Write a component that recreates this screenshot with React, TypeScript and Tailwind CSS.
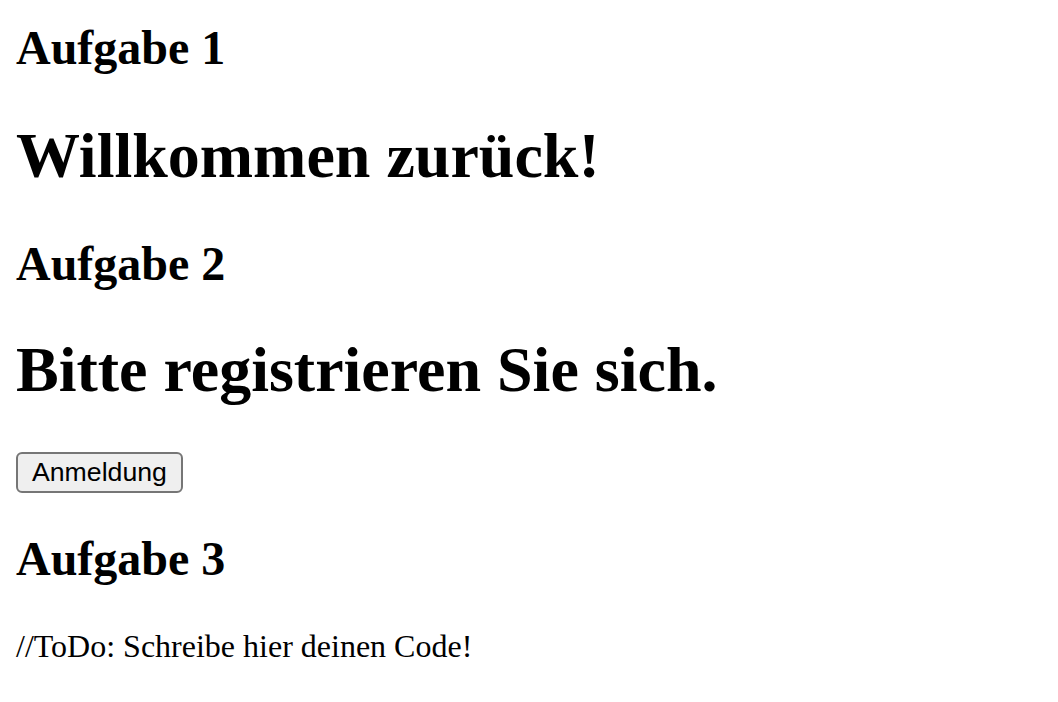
export default function App() {
  return (
    <div className="min-h-screen bg-white px-4 pt-5 text-black [font-family:'Liberation_Serif','Times_New_Roman',serif]">
      <h2 className="text-[48px] leading-[55px] font-bold">Aufgabe 1</h2>
      <h1 className="mt-[44px] text-[64px] leading-[74px] font-bold">Willkommen zurück!</h1>

      <h2 className="mt-[43px] text-[48px] leading-[55px] font-bold">Aufgabe 2</h2>
      <h1 className="mt-[42px] text-[64px] leading-[74px] font-bold">Bitte registrieren Sie sich.</h1>
      <div className="mt-[45px]">
        <button className="h-[41px] rounded-[6px] border-2 border-[#767676] bg-[#efefef] px-[14px] text-[26.67px] leading-none [font-family:'Liberation_Sans',Arial,sans-serif]">
          Anmeldung
        </button>
      </div>

      <h2 className="mt-[38px] text-[48px] leading-[55px] font-bold">Aufgabe 3</h2>
      <p className="mt-[42px] text-[32px] leading-[37px]">//ToDo: Schreibe hier deinen Code!</p>
    </div>
  )
}
